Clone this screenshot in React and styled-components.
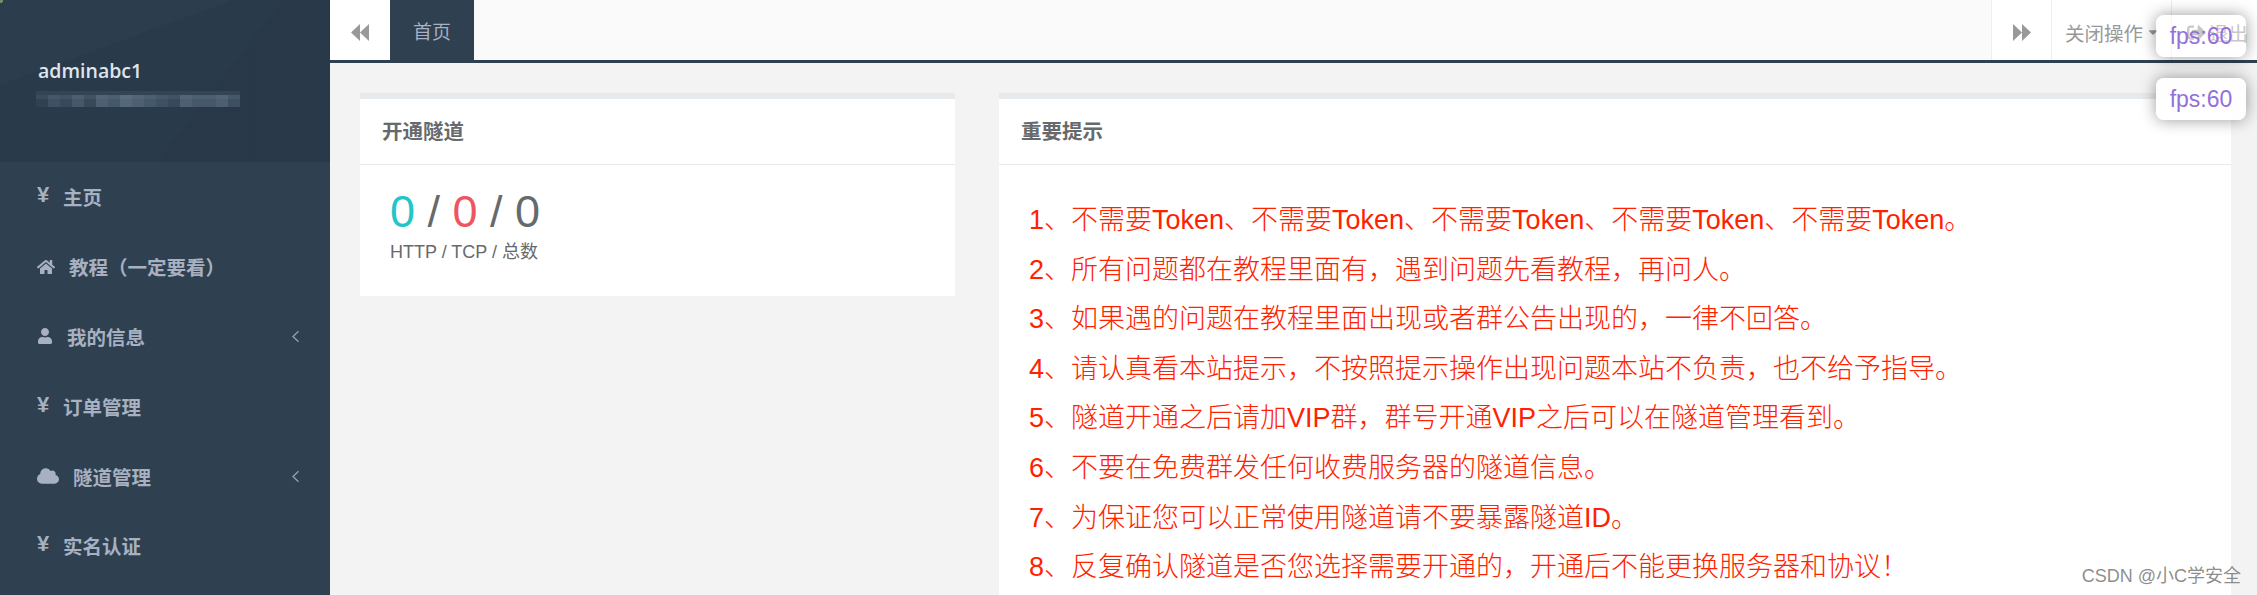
import React from "react";
import styled, { createGlobalStyle } from "styled-components";
import { FaHome, FaUser, FaCloud, FaSignOutAlt, FaCaretDown } from "react-icons/fa";

const Global = createGlobalStyle`
  html, body { margin: 0; padding: 0; height: 595px; overflow: hidden; background: #f3f3f4; }
  * { box-sizing: border-box; }
  body { font-family: "Liberation Sans", "Noto Sans CJK SC", sans-serif; }
`;
const Page = styled.div`
  position: relative; display: flex; width: 2257px; height: 595px; overflow: hidden; background: #f3f3f3;
`;
const Sidebar = styled.aside`
  flex: 0 0 330px; background: #2f4050; display: flex; flex-direction: column;
`;
const Profile = styled.div`
  flex: none; height: 162px; padding: 58px 0 0 38px;
  background:
    radial-gradient(circle at 0 0, #6f9160 0 3px, transparent 3.5px),
    linear-gradient(128deg, transparent 0 62%, rgba(0,0,0,.03) 62% 100%),
    linear-gradient(160deg, #2c3d4d 0 30%, #293a4a 30% 100%);
`;
const UserName = styled.div`
  font: 600 19.5px/26px "Open Sans", sans-serif; color: #dfe4ed;
`;
const Menu = styled.nav`display: flex; flex-direction: column;`;
const Item = styled.div`
  flex: none; height: 69.8px; display: flex; align-items: center; padding: 0 30px 0 37px;
  color: #a7b1c2; font-size: 19.5px; font-weight: 700;
  & > svg:first-child { flex: none; }
`;
const Yen = styled.span`width: 25px; font-size: 22px; font-weight: 700; margin-top: -3px;`;
const ItemLabel = styled.span`flex: 1; margin-left: ${p => p.$gap}px;`;
const Main = styled.main`flex: 1; display: flex; flex-direction: column; min-width: 0; min-height: 0;`;
const TopBar = styled.header`
  flex: none; height: 63px; display: flex; background: #fafafa; border-bottom: 3px solid #2f4050; align-items: stretch;
`;
const RoundBtn = styled.div`
  width: 60px; background: #fff; display: flex; align-items: center; justify-content: center; padding-top: 4px;
  ${p => p.$border && "border-left: 1px solid #eee;"}
`;
const Tab = styled.div`
  width: 84px; background: #2f4050; color: #a7b1c2; font-size: 19px; display: flex; align-items: center; justify-content: center;
`;
const Spacer = styled.div`flex: 1;`;
const Action = styled.div`
  width: ${p => p.$w}px; background: #fff; border-left: 1px solid #eee; color: #999; font-size: 19.5px;
  display: flex; align-items: center; padding: 4px 0 0 ${p => p.$pad}px; white-space: nowrap; gap: 3px;
`;
const Content = styled.div`
  flex: 1; min-height: 0; display: flex; align-items: flex-start; gap: 44px; padding: 30px 26px 0 30px;
`;
const Card = styled.section`
  flex: ${p => p.$wide ? "1 1 auto" : "0 0 595px"}; background: #fff; border-top: 6px solid #e7eaec;
`;
const CardTitle = styled.h5`
  margin: 0; height: 66px; line-height: 66px; padding-left: 22px; font-size: 20.5px; font-weight: 700; color: #676a6c;
  border-bottom: 1px solid #e7eaec;
`;
const CountBody = styled.div`height: 131px; padding: 21px 0 0 30px; color: #676a6c;`;
const Counts = styled.div`font-size: 45px; line-height: 52px; font-weight: 400;`;
const Num = styled.span`color: ${p => p.$c};`;
const Caption = styled.div`font-size: 18px; line-height: 24px; margin-top: 2px;`;
const NoticeBody = styled.ol`
  margin: 0; padding: 31px 0 40px 30px; list-style: none; color: #ff2200; font-size: 27px; font-weight: 300; height: 500px;
`;
const NoticeLine = styled.li`height: 49.6px; line-height: 49.6px; white-space: nowrap;`;
const Fps = styled.div`
  position: absolute; left: 2156px; top: ${p => p.$top}px; width: 90px; height: 42px; border-radius: 8px;
  background: rgba(255,255,255,${p => p.$a}); box-shadow: 0 0 16px rgba(0,0,0,.4);
  color: #9370db; font-size: 23px; display: flex; align-items: center; justify-content: center;
`;
const Watermark = styled.div`
  position: absolute; right: 16px; top: 564px; font-size: 18px; line-height: 24px; color: rgba(120,120,120,.85);
`;

const Arrows = ({ flip }) => (
  <svg width="18" height="17" viewBox="0 0 18 17" style={{ transform: flip ? "scaleX(-1)" : "none" }}>
    <path d="M9 0 L9 17 L0 8.5 Z M18 0 L18 17 L9 8.5 Z" fill="#999" />
  </svg>
);
const Chevron = () => (
  <svg width="9" height="13" viewBox="0 0 9 13">
    <path d="M7.5 1.2 L2 6.5 L7.5 11.8" fill="none" stroke="#8f9db2" strokeWidth="1.4" />
  </svg>
);
const mosaic = [0,2,1,3,1,4,3,5,4,3,2,1,4,3,3,4,2,3,4,1];
const Redacted = () => (
  <svg width="204" height="24" viewBox="0 0 204 24" style={{ display: "block", margin: "3px 0 0 -2px" }}>
    <rect x="0" y="4" width="204" height="8" fill="#3a4c5e" opacity=".6" />
    {mosaic.map((v, i) => (
      <rect key={i} x={i * 12} y="8" width="12" height="12" fill={`rgba(120,140,160,${0.1 + v * 0.09})`} />
    ))}
  </svg>
);

const notes = [
  "1、不需要Token、不需要Token、不需要Token、不需要Token、不需要Token。",
  "2、所有问题都在教程里面有，遇到问题先看教程，再问人。",
  "3、如果遇的问题在教程里面出现或者群公告出现的，一律不回答。",
  "4、请认真看本站提示，不按照提示操作出现问题本站不负责，也不给予指导。",
  "5、隧道开通之后请加VIP群，群号开通VIP之后可以在隧道管理看到。",
  "6、不要在免费群发任何收费服务器的隧道信息。",
  "7、为保证您可以正常使用隧道请不要暴露隧道ID。",
  "8、反复确认隧道是否您选择需要开通的，开通后不能更换服务器和协议！",
];

export default function App() {
  return (
    <Page>
      <Global />
      <Sidebar>
        <Profile>
          <UserName>adminabc1</UserName>
          <Redacted />
        </Profile>
        <Menu>
          <Item><Yen>¥</Yen><ItemLabel $gap={1}>主页</ItemLabel></Item>
          <Item><FaHome size={18} /><ItemLabel $gap={14}>教程（一定要看）</ItemLabel></Item>
          <Item><FaUser size={16} /><ItemLabel $gap={14}>我的信息</ItemLabel><Chevron /></Item>
          <Item><Yen>¥</Yen><ItemLabel $gap={1}>订单管理</ItemLabel></Item>
          <Item><FaCloud size={22} /><ItemLabel $gap={14}>隧道管理</ItemLabel><Chevron /></Item>
          <Item><Yen>¥</Yen><ItemLabel $gap={1}>实名认证</ItemLabel></Item>
        </Menu>
      </Sidebar>
      <Main>
        <TopBar>
          <RoundBtn><Arrows /></RoundBtn>
          <Tab>首页</Tab>
          <Spacer />
          <RoundBtn $border><Arrows flip /></RoundBtn>
          <Action $w={120} $pad={13}>关闭操作<FaCaretDown size={14} /></Action>
          <Action $w={86} $pad={15}><FaSignOutAlt size={19} />退出</Action>
        </TopBar>
        <Content>
          <Card>
            <CardTitle>开通隧道</CardTitle>
            <CountBody>
              <Counts><Num $c="#23c6c8">0</Num> / <Num $c="#ed5565">0</Num> / 0</Counts>
              <Caption>HTTP / TCP / 总数</Caption>
            </CountBody>
          </Card>
          <Card $wide>
            <CardTitle>重要提示</CardTitle>
            <NoticeBody>
              {notes.map(n => <NoticeLine key={n}>{n}</NoticeLine>)}
            </NoticeBody>
          </Card>
        </Content>
      </Main>
      <Fps $top={15} $a={0.45}>fps:60</Fps>
      <Fps $top={78} $a={0.92}>fps:60</Fps>
      <Watermark>CSDN @小C学安全</Watermark>
    </Page>
  );
}
